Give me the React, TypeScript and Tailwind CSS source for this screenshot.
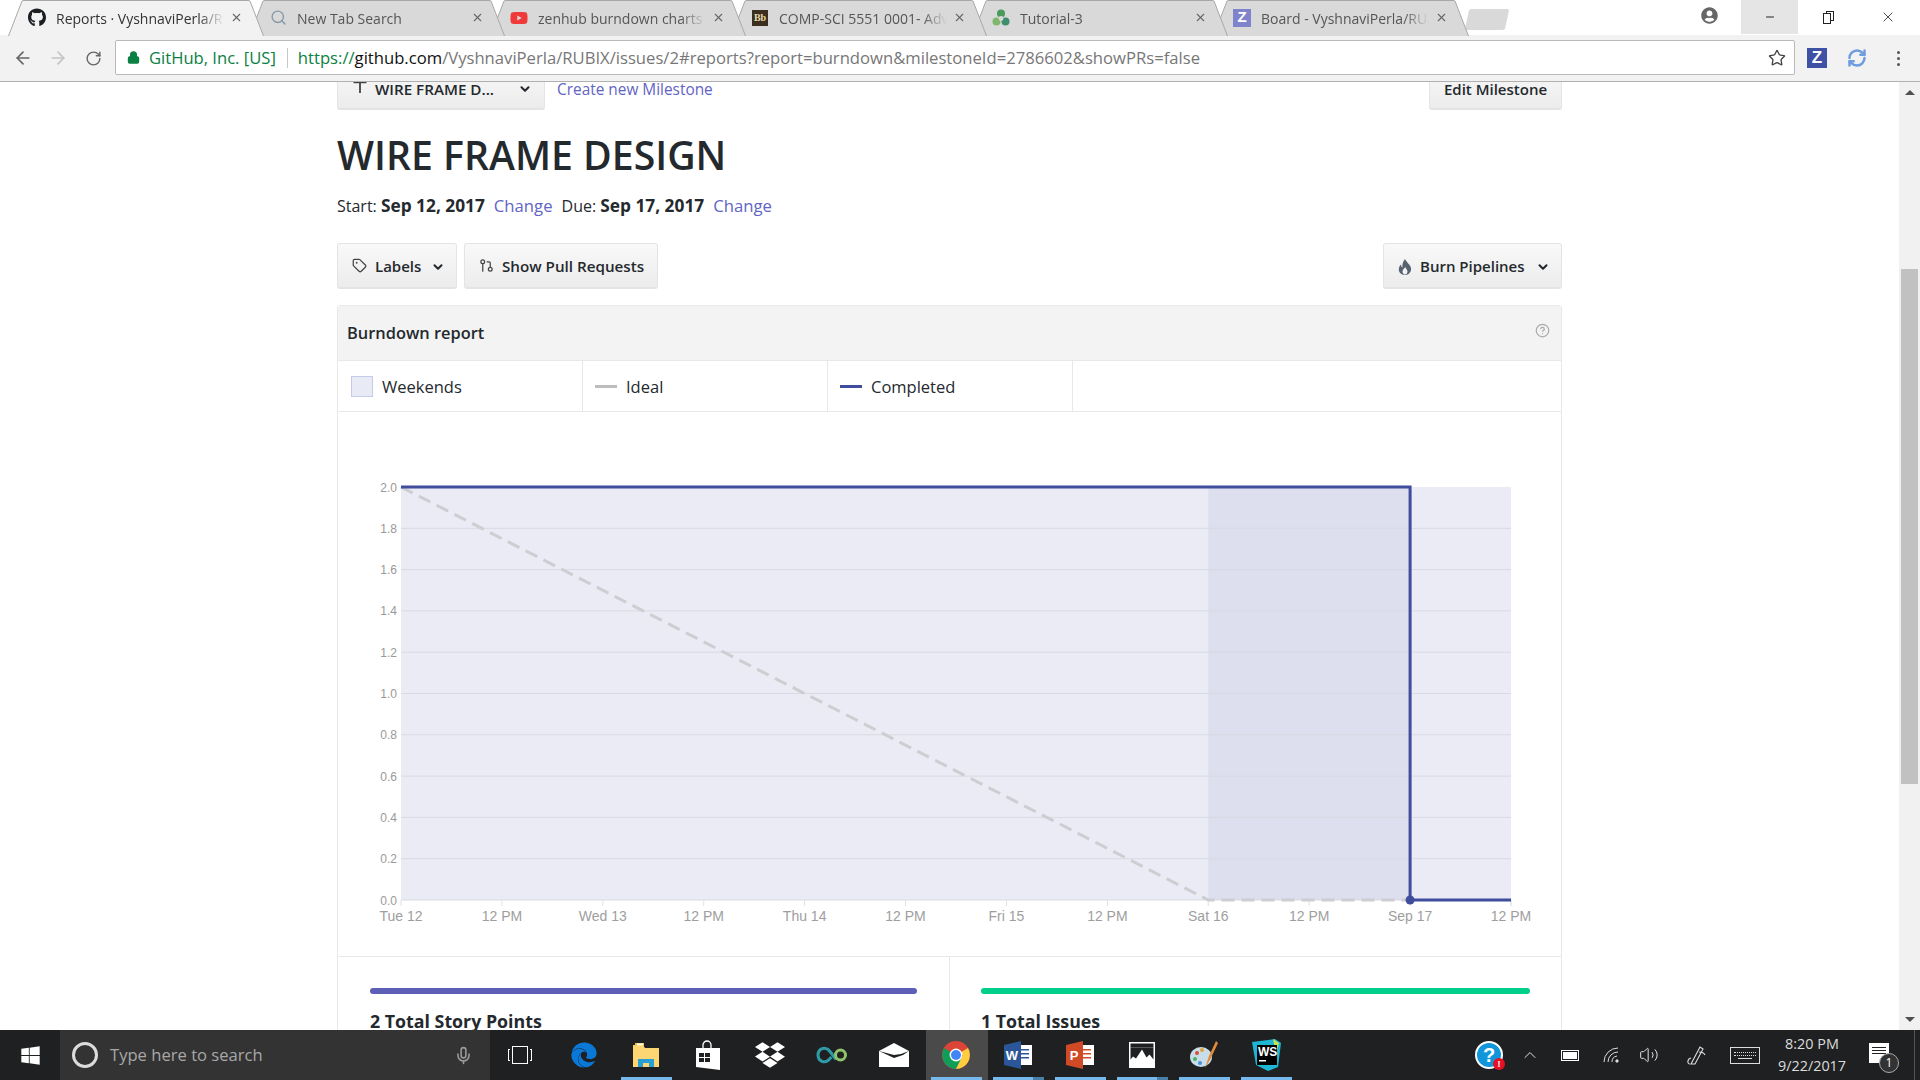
import { ArrowLeft, ArrowRight, ChevronDown, CircleHelp, Lock, RefreshCw, RotateCw, Search, Star, Tag, GitPullRequest, X, Minus, ChevronUp, Mic, Volume2 } from "lucide-react";
import { FaDropbox, FaEdge, FaGithub, FaUserCircle, FaWindows, FaYoutube } from "react-icons/fa";
import type { ReactNode } from "react";

const UI = "font-['Open_Sans',sans-serif]";

function TabShape({ active }: { active?: boolean }) {
  return (
    <svg className="absolute inset-0 w-full h-full" viewBox="0 0 256 36" preserveAspectRatio="none">
      <path
        d="M0.5 36 L14 1 Q14.5 0.5 16 0.5 L240 0.5 Q241.5 0.5 242 1 L255.5 36"
        fill={active ? "#f2f2f2" : "#d9d9d9"}
        stroke="#a8a8a8"
        strokeWidth="1"
      />
    </svg>
  );
}

function BrowserTab({ title, icon, active, z }: { title: string; icon: ReactNode; active?: boolean; z: string }) {
  return (
    <div className={`relative w-[256px] h-[36px] -mr-[15px] shrink-0 ${z}`}>
      <TabShape active={active} />
      <div className="relative h-[35px] flex items-center pl-[20px] pr-[21px]">
        <div className="w-[18px] h-[18px] flex items-center justify-center shrink-0">{icon}</div>
        <span className={`ml-[10px] flex-1 overflow-hidden whitespace-nowrap text-[14px] pt-px [mask-image:linear-gradient(to_right,black_85%,transparent)] ${active ? "text-[#333]" : "text-[#555]"}`}>
          {title}
        </span>
        <X size={13} strokeWidth={2} className="shrink-0 ml-[6px] text-[#666]" />
      </div>
    </div>
  );
}

function ZBadge({ size = 18 }: { size?: number }) {
  return (
    <div
      className="bg-[#7f83cc] text-white font-bold flex items-center justify-center text-[15px] font-['Liberation_Sans',sans-serif]"
      style={{ width: size, height: size }}
    >
      Z
    </div>
  );
}

function TabGreen() {
  return (
    <svg width="18" height="18" viewBox="0 0 18 18">
      <circle cx="9" cy="4.5" r="4" fill="#4a9a5c" />
      <circle cx="4.5" cy="12.5" r="4" fill="#7fb86a" />
      <circle cx="13.5" cy="12.5" r="4" fill="#3f8f6f" />
      <circle cx="9" cy="9.5" r="2.4" fill="#d9d9d9" />
    </svg>
  );
}

function TopChrome() {
  return (
    <div className={`shrink-0 ${UI}`}>
      <div className="h-[35px] bg-white flex relative">
        <div className="flex pl-[8px]">
          <BrowserTab z="z-60" active title="Reports · VyshnaviPerla/RUBIX" icon={<FaGithub size={19} className="text-[#1b1f23]" />} />
          <BrowserTab z="z-50" title="New Tab Search" icon={<Search size={17} className="text-[#8a9aa8]" />} />
          <BrowserTab z="z-40" title="zenhub burndown charts" icon={<FaYoutube size={18} className="text-[#f03a3a]" />} />
          <BrowserTab
            z="z-30"
            title="COMP-SCI 5551 0001- Adv"
            icon={<div className="w-[16px] h-[16px] bg-[#3b3020] text-[#e8d9a8] text-[10px] font-bold leading-[16px] text-center font-['Liberation_Serif',serif]">Bb</div>}
          />
          <BrowserTab z="z-20" title="Tutorial-3" icon={<TabGreen />} />
          <BrowserTab z="z-10" title="Board - VyshnaviPerla/RUBIX" icon={<ZBadge />} />
          <div className="w-[40px] h-[21px] mt-[9px] ml-[13px] bg-[#d9d9d9] rounded-[2px] -skew-x-12" />
        </div>
        <div className="ml-auto flex h-[34px] items-center pr-[2px]">
          <FaUserCircle size={17} className="text-[#666] mr-[23px] -mt-[3px]" />
          <div className="w-[57px] h-full bg-[#e5e5e5] flex items-center justify-center">
            <Minus size={12} className="text-[#222]" />
          </div>
          <div className="w-[60px] flex justify-center">
            <div className="relative w-[11px] h-[13px]">
              <div className="absolute right-0 top-0 w-[8px] h-[10px] border border-[#222]" />
              <div className="absolute left-0 bottom-0 w-[8px] h-[11px] border border-[#222] bg-white" />
            </div>
          </div>
          <div className="w-[60px] flex justify-center">
            <X size={16} strokeWidth={1.2} className="text-[#222]" />
          </div>
        </div>
      </div>
      <div className="h-[47px] bg-[#f2f2f2] border-b border-[#b0b0b0] flex items-center">
        <div className="w-[115px] flex items-center text-[#666] shrink-0">
          <ArrowLeft size={20} className="ml-[13px]" />
          <ArrowRight size={20} className="ml-[15px] text-[#c4c4c4]" />
          <RotateCw size={17} className="ml-[17px]" />
        </div>
        <div className="w-[1680px] h-[35px] -mt-[1px] bg-white border border-[#b9b9b9] rounded-[2px] flex items-center shrink-0">
          <Lock size={13} strokeWidth={3} className="ml-[11px] text-[#0b8043]" fill="#0b8043" />
          <span className="ml-[9px] pt-[2px] text-[16.6px] text-[#0b8043] whitespace-nowrap">GitHub, Inc. [US]</span>
          <div className="w-px h-[20px] bg-[#c8c8c8] ml-[11px]" />
          <span className="ml-[10px] pt-[2px] text-[16.65px] whitespace-nowrap">
            <span className="text-[#0b8043]">https://</span>
            <span className="text-[#111]">github.com</span>
            <span className="text-[#777]">/VyshnaviPerla/RUBIX/issues/2#reports?report=burndown&amp;milestoneId=2786602&amp;showPRs=false</span>
          </span>
          <Star size={18} strokeWidth={1.8} className="ml-auto mr-[8px] text-[#444]" />
        </div>
        <div className="flex-1 flex items-center">
          <div className="ml-[12px] w-[20px] h-[20px] bg-[#3f51a5] text-white font-bold flex items-center justify-center text-[17px] font-['Liberation_Sans',sans-serif]">Z</div>
          <RefreshCw size={20} strokeWidth={3} className="ml-[20px] text-[#6f9be0]" />
          <div className="ml-[30px] flex flex-col gap-[3px]">
            <div className="w-[3px] h-[3px] rounded-full bg-[#555]" />
            <div className="w-[3px] h-[3px] rounded-full bg-[#555]" />
            <div className="w-[3px] h-[3px] rounded-full bg-[#555]" />
          </div>
        </div>
      </div>
    </div>
  );
}

function Btn({ children, className = "" }: { children: ReactNode; className?: string }) {
  return (
    <div className={`h-[46px] flex items-center rounded-[3px] border border-[#e4e4e4] border-b-2 bg-gradient-to-b from-[#f9f9f9] to-[#ececec] text-[15px] font-semibold text-[#24292e] whitespace-nowrap ${className}`}>
      {children}
    </div>
  );
}

function FlameIcon() {
  return (
    <svg width="14" height="16" viewBox="0 0 14 16" className="shrink-0">
      <path d="M7 0c1 3 5 5 6 9 .7 3.500-2 7-6 7s-7-3-6-7c.3-1.500 1-2.500 2-3.500 0 1.500.5 2.500 1.500 3C4 5.500 5 2.500 7 0z" fill="#566270" />
      <path d="M7.200 8c.3 1.500 2.300 2.500 2.300 4.500 0 1.500-1 3-2.500 3s-2.500-1.500-2.500-3C4.500 10.500 6.500 9.500 7.200 8z" fill="#f1f1f1" />
    </svg>
  );
}

const xLabels = ["Tue 12", "12 PM", "Wed 13", "12 PM", "Thu 14", "12 PM", "Fri 15", "12 PM", "Sat 16", "12 PM", "Sep 17", "12 PM"];
const yLabels = ["2.0", "1.8", "1.6", "1.4", "1.2", "1.0", "0.8", "0.6", "0.4", "0.2", "0.0"];

// viewBox uses page coordinates so the numbers read straight off the screenshot
function BurndownChart() {
  const left = 401;
  const right = 1511;
  const top = 487;
  const bottom = 900;
  const stepX = (right - left) / 11;
  const stepY = (bottom - top) / 10;
  return (
    <svg className="block w-[1223px] h-[544px]" viewBox="338 412 1223 544">
      <rect x={left} y={top} width={right - left} height={bottom - top} fill="#ebebf6" />
      <rect x={left + stepX * 8} y={top} width={stepX * 2} height={bottom - top} fill="#dddeee" />
      {yLabels.map((label, i) => (
        <g key={i}>
          {i > 0 && <line x1={left} x2={right} y1={top + i * stepY} y2={top + i * stepY} stroke="#d9d9e4" />}
          <text x={397} y={top + i * stepY + 4.5} textAnchor="end" fontSize="12" fill="#999" fontFamily="Liberation Sans, sans-serif">
            {label}
          </text>
        </g>
      ))}
      {xLabels.map((label, i) => (
        <g key={i}>
          <line x1={left + i * stepX} x2={left + i * stepX} y1={bottom} y2={bottom + 6} stroke="#e2e2e2" />
          <text x={left + i * stepX} y={921} textAnchor="middle" fontSize="14" fill="#9e9e9e" fontFamily="Liberation Sans, sans-serif">
            {label}
          </text>
        </g>
      ))}
      <line x1={right} x2={right} y1={bottom} y2={bottom + 6} stroke="#e2e2e2" />
      <polyline points={`${left},${top} ${left + stepX * 8},${bottom} ${left + stepX * 10},${bottom}`} fill="none" stroke="#cdcdd2" strokeWidth="3" strokeDasharray="13 7" />
      <polyline points={`${left},${top} ${left + stepX * 10},${top} ${left + stepX * 10},${bottom} ${right},${bottom}`} fill="none" stroke="#3f4d9c" strokeWidth="3" />
      <circle cx={left + stepX * 10} cy={bottom} r="4.5" fill="#3f4d9c" />
    </svg>
  );
}

function ReportPage() {
  return (
    <div className={`flex-1 overflow-hidden bg-white text-[#24292e] ${UI}`}>
      <div className="ml-[337px] w-[1225px] -mt-[18px]">
        <div className="flex items-start">
          <Btn className="w-[208px] pl-[14px] pt-[5px] rounded-t-none">
            <svg width="16" height="16" viewBox="0 0 16 16" className="shrink-0 -mt-[4px]">
              <path d="M1.500 2.500h13v1.800H8.900V14H7.100V4.300H1.500z" fill="#444" />
            </svg>
            <span className="ml-[7px] text-[15.2px] font-semibold">WIRE FRAME D...</span>
            <ChevronDown size={14} strokeWidth={3.5} className="ml-auto mr-[12px]" />
          </Btn>
          <a className="ml-[12px] mt-[16px] text-[15.4px] leading-[20px] text-[#6264c4]">Create new Milestone</a>
          <Btn className="ml-auto w-[133px] pt-[5px] justify-center">Edit Milestone</Btn>
        </div>
        <h1 className="mt-[16px] text-[39.2px] leading-[58px] font-semibold text-[#24292e]">WIRE FRAME DESIGN</h1>
        <div className="mt-[10px] flex items-center h-[24px] text-[16px] whitespace-pre">
          <span>Start: </span>
          <b className="font-bold text-[17.3px]">Sep 12, 2017</b>
          <a className="ml-[9px] text-[16.7px] text-[#6264c4]">Change</a>
          <span className="ml-[9px]">Due: </span>
          <b className="font-bold text-[17.3px]">Sep 17, 2017</b>
          <a className="ml-[9px] text-[16.7px] text-[#6264c4]">Change</a>
        </div>
        <div className="mt-[25px] flex">
          <Btn className="w-[120px] pl-[14px] pt-[2px]">
            <Tag size={15} className="text-[#444] -mt-[2px]" />
            <span className="ml-[8px]">Labels</span>
            <ChevronDown size={14} strokeWidth={3.5} className="ml-auto mr-[11px]" />
          </Btn>
          <Btn className="ml-[7px] w-[194px] pl-[14px] pt-[2px]">
            <GitPullRequest size={15} className="text-[#444] -mt-[2px]" />
            <span className="ml-[8px] text-[15.2px]">Show Pull Requests</span>
          </Btn>
          <Btn className="ml-auto w-[179px] pl-[14px] pt-[2px]">
            <FlameIcon />
            <span className="ml-[8px]">Burn Pipelines</span>
            <ChevronDown size={14} strokeWidth={3.5} className="ml-auto mr-[11px]" />
          </Btn>
        </div>
        <div className="mt-[16px] border border-[#e8e8e8] rounded-t-[3px]">
          <div className="h-[55px] bg-[#f3f3f3] border-b border-[#e8e8e8] flex items-center pl-[9px] pr-[11px]">
            <span className="text-[16.4px] font-semibold mt-[1px]">Burndown report</span>
            <CircleHelp size={15} className="ml-auto -mt-[5px] text-[#aaa]" />
          </div>
          <div className="h-[51px] border-b border-[#e8e8e8] flex text-[16.5px]">
            <div className="w-[245px] border-r border-[#e8e8e8] flex items-center pl-[13px]">
              <div className="w-[22px] h-[21px] bg-[#e8eaf6] border border-[#c5cae9]" />
              <span className="ml-[9px] pt-[2px]">Weekends</span>
            </div>
            <div className="w-[245px] border-r border-[#e8e8e8] flex items-center pl-[12px]">
              <div className="w-[22px] h-[3px] bg-[#bdbdbd]" />
              <span className="ml-[9px] pt-[2px]">Ideal</span>
            </div>
            <div className="w-[245px] border-r border-[#e8e8e8] flex items-center pl-[12px]">
              <div className="w-[22px] h-[3px] bg-[#3f4d9c]" />
              <span className="ml-[9px] pt-[2px]">Completed</span>
            </div>
          </div>
          <BurndownChart />
          <div className="border-t border-[#e8e8e8] flex h-[160px]">
            <div className="w-[612px] border-r border-[#e8e8e8] pl-[32px] pr-[32px] pt-[31px]">
              <div className="h-[6px] rounded-full bg-[#5c5fb5]" />
              <div className="mt-[14px] text-[17.8px] font-bold leading-[26px]">2 Total Story Points</div>
            </div>
            <div className="flex-1 pl-[31px] pr-[31px] pt-[31px]">
              <div className="h-[6px] rounded-full bg-[#00cf8b]" />
              <div className="mt-[14px] text-[17.8px] font-bold leading-[26px]">1 Total Issues</div>
            </div>
          </div>
        </div>
      </div>
    </div>
  );
}

function Scrollbar() {
  return (
    <div className="w-[21px] shrink-0 bg-[#f1f1f1] flex flex-col items-center">
      <div className="h-[21px] flex items-center justify-center">
        <div className="w-0 h-0 border-x-[5px] border-x-transparent border-b-[5px] border-b-[#505050]" />
      </div>
      <div className="mt-[166px] w-[17px] h-[515px] bg-[#c1c1c1]" />
      <div className="mt-auto h-[21px] flex items-center justify-center">
        <div className="w-0 h-0 border-x-[5px] border-x-transparent border-t-[5px] border-t-[#505050]" />
      </div>
    </div>
  );
}

function TaskCell({ children, bar, split, hover }: { children: ReactNode; bar?: boolean; split?: boolean; hover?: boolean }) {
  return (
    <div className={`relative w-[62px] h-full flex items-center justify-center pr-[2px] shrink-0 ${hover ? "bg-[#4a4a4a]" : ""}`}>
      {children}
      {bar && (
        <div className="absolute bottom-0 left-[5px] right-[6px] h-[3px] flex">
          <div className="flex-1 bg-[#76b9ed]" />
          {split && <div className="w-[11px] bg-[#4a7fa8]" />}
        </div>
      )}
    </div>
  );
}

function FilesIcon() {
  return (
    <svg width="28" height="26" viewBox="0 0 28 26">
      <path d="M1 3h10l2 3h14v19H1z" fill="#fbd673" />
      <rect x="3" y="1" width="9" height="3" fill="#f4c542" />
      <rect x="5" y="1.5" width="6" height="2" fill="#fff" />
      <path d="M6 25v-8h16v8h-5v-4h-6v4z" fill="#2a9fd6" />
    </svg>
  );
}

function StoreIcon() {
  return (
    <svg width="26" height="30" viewBox="0 0 26 30">
      <path d="M8 8V5a4 4 0 0 1 8 0v3" fill="none" stroke="#fff" strokeWidth="1.3" />
      <path d="M1 8h24v22L1 27z" fill="#fff" />
      <g fill="#1f2022">
        <rect x="4" y="13" width="5" height="4" />
        <rect x="10" y="13" width="5" height="4" />
        <rect x="4" y="18" width="5" height="4" />
        <rect x="10" y="18" width="5" height="4" />
      </g>
    </svg>
  );
}

function InfinityIcon() {
  return (
    <svg width="32" height="20" viewBox="0 0 32 20" fill="none" strokeWidth="3">
      <path d="M20 14.500C17 11 15 7 12 4.500C8 1.500 2 4 2 10C2 16 8 18.500 12 15.500L15.500 12" stroke="#2f9aa6" />
      <circle cx="24.500" cy="10" r="5" stroke="#8fc46a" />
    </svg>
  );
}

function MailIcon() {
  return (
    <svg width="30" height="24" viewBox="0 0 30 24">
      <path d="M0 8 15 0l15 8v16H0z" fill="#fff" />
      <path d="M0 8 15 15l9-3 6-4-8 3-7 1z" fill="#1f2022" />
    </svg>
  );
}

function ChromeIcon() {
  return (
    <svg width="28" height="28" viewBox="0 0 28 28">
      <circle cx="14" cy="14" r="14" fill="#db4437" />
      <path d="M14 14 2 7.100A14 14 0 0 0 14 28l6-10z" fill="#0f9d58" />
      <path d="M14 14l6.900 0L14 28A14 14 0 0 0 26 7z" fill="#ffcd40" />
      <circle cx="14" cy="14" r="6.400" fill="#fff" />
      <circle cx="14" cy="14" r="5" fill="#4285f4" />
    </svg>
  );
}

function OfficeIcon({ letter, dark, light }: { letter: string; dark: string; light: string }) {
  return (
    <svg width="28" height="28" viewBox="0 0 28 28">
      <rect x="12" y="4" width="16" height="20" fill="#fff" />
      <rect x="16" y="8" width="9" height="1.500" fill={light} />
      <rect x="16" y="12" width="9" height="1.500" fill={light} />
      <rect x="16" y="16" width="9" height="1.500" fill={light} />
      <path d="M0 4 17 0v28L0 24z" fill={dark} />
      <text x="8" y="19" textAnchor="middle" fontSize="13" fontWeight="700" fill="#fff" fontFamily="Liberation Sans, sans-serif">
        {letter}
      </text>
    </svg>
  );
}

function PhotosIcon() {
  return (
    <svg width="26" height="26" viewBox="0 0 26 26">
      <rect width="26" height="26" fill="#fff" />
      <rect x="1.500" y="1.500" width="23" height="4" fill="#1f2022" />
      <path d="M1.500 5.500h23v12l-4-5-3 3-4.500-8-6 9-3-2-2.500 3z" fill="#1f2022" />
    </svg>
  );
}

function PaintIcon() {
  return (
    <svg width="30" height="30" viewBox="0 0 30 30">
      <ellipse cx="12" cy="17" rx="11" ry="10" fill="#c9dde8" />
      <circle cx="8" cy="13" r="2" fill="#d94d3a" />
      <circle cx="13" cy="10" r="2" fill="#e0a43a" />
      <circle cx="6" cy="19" r="2" fill="#4caf6a" />
      <circle cx="11" cy="23" r="2" fill="#4a90d9" />
      <path d="M27 1 20 16l-4 12 6-10 7-15z" fill="#e08a3a" />
    </svg>
  );
}

function WebStormIcon() {
  return (
    <div className="relative w-[30px] h-[32px]">
      <svg width="30" height="32" viewBox="0 0 30 32" className="absolute inset-0">
        <path d="M1 3 24 0l6 4-3 24-10 4L5 26z" fill="#1fb6d4" />
        <path d="M22 0l6 4-3 10z" fill="#c9e34c" />
        <rect x="6" y="6" width="20" height="20" fill="#000" />
        <rect x="8" y="21" width="7" height="1.500" fill="#fff" />
      </svg>
      <span className="absolute left-[7px] top-[6px] text-[12px] leading-[14px] font-bold text-white font-['Liberation_Sans',sans-serif]">WS</span>
    </div>
  );
}

function Taskbar() {
  return (
    <div className={`h-[50px] shrink-0 bg-[#1f2022] flex items-center text-[#e4e4e4] ${UI}`}>
      <div className="w-[60px] h-full flex items-center justify-center">
        <FaWindows size={21} className="text-white" />
      </div>
      <div className="w-[430px] h-full bg-[#333333] flex items-center">
        <div className="ml-[12px] w-[26px] h-[26px] rounded-full border-[3px] border-[#dcdcdc]" />
        <span className="ml-[12px] text-[16.6px] text-[#a8a8a8]">Type here to search</span>
        <Mic size={19} className="ml-auto mr-[17px] text-[#9a9a9a]" />
      </div>
      <div className="w-[64px] h-full flex items-center justify-center pr-[4px]">
        <div className="relative w-[24px] h-[20px] flex items-center justify-center">
          <div className="w-[16px] h-[18px] border-[1.5px] border-white" />
          <div className="absolute left-0 top-[4px] w-[2px] h-[12px] border-l border-y border-white" />
          <div className="absolute right-0 top-[4px] w-[2px] h-[12px] border-r border-y border-white" />
        </div>
      </div>
      <TaskCell><FaEdge size={26} className="text-[#0a78d7]" /></TaskCell>
      <TaskCell bar><FilesIcon /></TaskCell>
      <TaskCell><StoreIcon /></TaskCell>
      <TaskCell><FaDropbox size={30} className="text-white" /></TaskCell>
      <TaskCell><InfinityIcon /></TaskCell>
      <TaskCell><MailIcon /></TaskCell>
      <TaskCell bar hover><ChromeIcon /></TaskCell>
      <TaskCell bar split><OfficeIcon letter="W" dark="#2b579a" light="#2b579a" /></TaskCell>
      <TaskCell bar><OfficeIcon letter="P" dark="#d04a27" light="#d04a27" /></TaskCell>
      <TaskCell bar split><PhotosIcon /></TaskCell>
      <TaskCell bar><PaintIcon /></TaskCell>
      <TaskCell bar><WebStormIcon /></TaskCell>
      <div className="ml-auto flex items-center h-full">
        <div className="w-[48px] flex justify-center pr-[2px]">
          <div className="relative w-[28px] h-[28px] rounded-full bg-[#1296db] border-2 border-white text-white text-[20px] font-bold leading-[24px] text-center font-['Liberation_Sans',sans-serif]">
            ?
            <div className="absolute -right-[4px] -bottom-[3px] w-[12px] h-[12px] rounded-full bg-[#e81123] text-[9px] leading-[12px]">!</div>
          </div>
        </div>
        <div className="w-[32px] flex justify-center"><ChevronUp size={20} strokeWidth={1.2} /></div>
        <div className="w-[48px] flex justify-center">
          <div className="w-[18px] h-[11px] border border-white p-[1px] flex">
            <div className="flex-1 bg-white" />
          </div>
        </div>
        <div className="w-[36px] flex justify-center">
          <svg width="18" height="16" viewBox="0 0 18 16" fill="none" stroke="#ddd" strokeWidth="1">
            <path d="M1 15A14 14 0 0 1 15 1M5 15A10 10 0 0 1 15 5M9 15a6 6 0 0 1 5-6" />
            <circle cx="14" cy="14" r="1.200" fill="#ddd" />
          </svg>
        </div>
        <div className="w-[38px] flex justify-center"><Volume2 size={20} strokeWidth={1.2} /></div>
        <div className="w-[58px] flex justify-center pr-[3px]">
          <svg width="20" height="20" viewBox="0 0 20 20" fill="none" stroke="#ddd" strokeWidth="1.100">
            <path d="M5 19 14 2l3 2-8 15zM5 13c-4 1-4 6-1 6M13 7c3 0 5 1 6 3" />
          </svg>
        </div>
        <div className="w-[38px] flex justify-center">
          <div className="w-[30px] h-[17px] border border-[#ddd] flex flex-col items-center justify-center gap-[2px]">
            <div className="w-[22px] border-t border-dotted border-[#ddd]" />
            <div className="w-[22px] border-t border-dotted border-[#ddd]" />
            <div className="w-[14px] border-t border-[#ddd]" />
          </div>
        </div>
        <div className="w-[96px] flex flex-col items-center text-[14.4px] leading-[22px] text-[#dcdcdc]">
          <span>8:20 PM</span>
          <span>9/22/2017</span>
        </div>
        <div className="w-[46px] flex justify-center pr-[4px]">
          <div className="relative w-[20px] h-[20px] bg-white -translate-x-[2px] -translate-y-[2px] flex flex-col gap-[2px] p-[3px] pt-[4px]">
            <div className="h-px bg-[#222]" />
            <div className="h-px bg-[#222]" />
            <div className="h-px bg-[#222]" />
            <div className="absolute -right-[10px] -bottom-[10px] w-[20px] h-[20px] rounded-full bg-[#333] border border-[#aaa] text-white text-[12px] leading-[18px] text-center">1</div>
          </div>
        </div>
        <div className="w-[14px] h-full flex justify-end pr-[5px]">
          <div className="w-px h-full bg-[#555]" />
        </div>
      </div>
    </div>
  );
}

export default function App() {
  return (
    <div className="w-[1920px] h-[1080px] overflow-hidden flex flex-col bg-white">
      <TopChrome />
      <div className="flex-1 min-h-0 flex">
        <ReportPage />
        <Scrollbar />
      </div>
      <Taskbar />
    </div>
  );
}
